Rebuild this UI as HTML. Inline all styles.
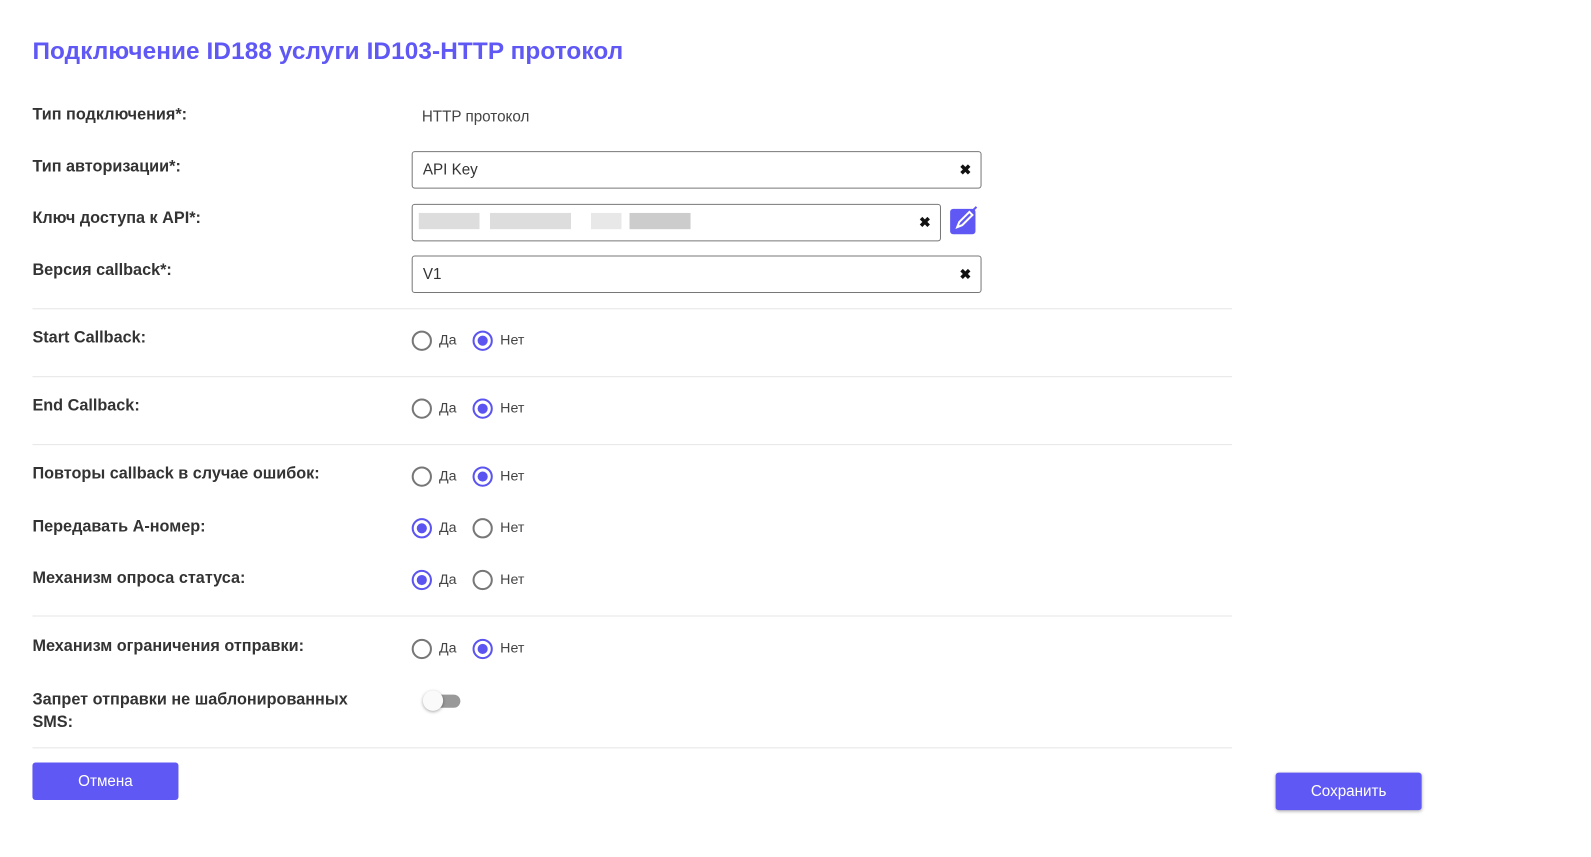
<!DOCTYPE html>
<html><head><meta charset="utf-8"><style>
body{margin:0;background:#fff;font-family:"Liberation Sans",sans-serif;color:#222;width:1591px;height:856px;position:relative;overflow:hidden}
#w{position:absolute;left:0;top:0;width:1570px;height:845px;transform:scale(1.014);transform-origin:0 0}
.a{position:absolute}
h1{position:absolute;left:32px;top:37px;margin:0;font-size:24px;font-weight:bold;color:#5f58f5;letter-spacing:0.1px}
.lbl{position:absolute;left:32px;font-size:16px;font-weight:bold;color:#333;margin-top:1px}
.inp{position:absolute;left:406px;width:562px;height:37px;border:1px solid #777;border-radius:3px;box-sizing:border-box;font-size:15px;padding:9px 10px;color:#333}
.x{position:absolute;right:9px;top:9px;font-size:14px;font-weight:bold;color:#111}
.hr{position:absolute;left:32px;width:1183px;height:1px;background:#e6e6e6}
.r{position:absolute;left:406px;font-size:14px;color:#444}
.r i{display:inline-block;width:16px}
.c{display:inline-block;width:16px;height:16px;border:2px solid #777;border-radius:50%;vertical-align:middle;margin-right:7px;position:relative}
.c.on{border-color:#5b54f0}.c.on:after{content:"";position:absolute;left:3px;top:3px;width:10px;height:10px;border-radius:50%;background:#5b54f0}
.btn{position:absolute;background:#5f58f5;color:#fff;font-size:15px;text-align:center;border-radius:3px;line-height:37px;height:37px;width:144px}
</style></head><body><div id="w">
<h1>Подключение ID188 услуги ID103-HTTP протокол</h1>
<div class="lbl" style="top:104px">Тип подключения*:</div>
<div class="a" style="left:416px;top:107px;font-size:15px;color:#444">HTTP протокол</div>
<div class="lbl" style="top:155px">Тип авторизации*:</div>
<div class="inp" style="top:149px">API Key<span class="x">✖</span></div>
<div class="lbl" style="top:206px">Ключ доступа к API*:</div>
<div class="inp" style="top:201px;width:522px"><span class="a" style="left:6px;top:8px;width:268px;height:16px;background:linear-gradient(90deg,#ddd 0 60px,#fff 60px 70px,#ddd 70px 150px,#fff 150px 170px,#e8e8e8 170px 200px,#fff 200px 208px,#ccc 208px)"></span><span class="x">✖</span></div>
<svg class="a" style="left:936px;top:203px" width="30" height="30" viewBox="0 0 30 30"><rect x="1" y="3" width="25" height="25" rx="3" fill="#5f58f5"/><path d="M8 21l2-5 10-10 3 3-10 10z" fill="none" stroke="#fff" stroke-width="2"/><path d="M24 4l3-3" stroke="#5f58f5" stroke-width="2"/></svg>
<div class="lbl" style="top:257px">Версия callback*:</div>
<div class="inp" style="top:252px">V1<span class="x">✖</span></div>
<div class="hr" style="top:304px"></div>
<div class="lbl" style="top:324px">Start Callback:</div>
<div class="r" style="top:326px"><span class="c"></span>Да<i></i><span class="c on"></span>Нет</div>
<div class="hr" style="top:371px"></div>
<div class="lbl" style="top:391px">End Callback:</div>
<div class="r" style="top:393px"><span class="c"></span>Да<i></i><span class="c on"></span>Нет</div>
<div class="hr" style="top:438px"></div>
<div class="lbl" style="top:458px">Повторы callback в случае ошибок:</div>
<div class="r" style="top:460px"><span class="c"></span>Да<i></i><span class="c on"></span>Нет</div>
<div class="lbl" style="top:510px">Передавать А-номер:</div>
<div class="r" style="top:511px"><span class="c on"></span>Да<i></i><span class="c"></span>Нет</div>
<div class="lbl" style="top:561px">Механизм опроса статуса:</div>
<div class="r" style="top:562px"><span class="c on"></span>Да<i></i><span class="c"></span>Нет</div>
<div class="hr" style="top:607px"></div>
<div class="lbl" style="top:628px">Механизм ограничения отправки:</div>
<div class="r" style="top:630px"><span class="c"></span>Да<i></i><span class="c on"></span>Нет</div>
<div class="lbl" style="top:679px;line-height:22px">Запрет отправки не шаблонированных<br>SMS:</div>
<div class="a" style="left:420px;top:685px;width:34px;height:13px;border-radius:7px;background:#999"></div>
<div class="a" style="left:417px;top:681px;width:20px;height:20px;border-radius:50%;background:#fafafa;box-shadow:0 1px 3px rgba(0,0,0,.35)"></div>
<div class="hr" style="top:737px"></div>
<div class="btn" style="left:32px;top:752px">Отмена</div>
<div class="btn" style="left:1258px;top:762px;box-shadow:0 1px 3px rgba(0,0,0,.3)">Сохранить</div>
</div></body></html>
